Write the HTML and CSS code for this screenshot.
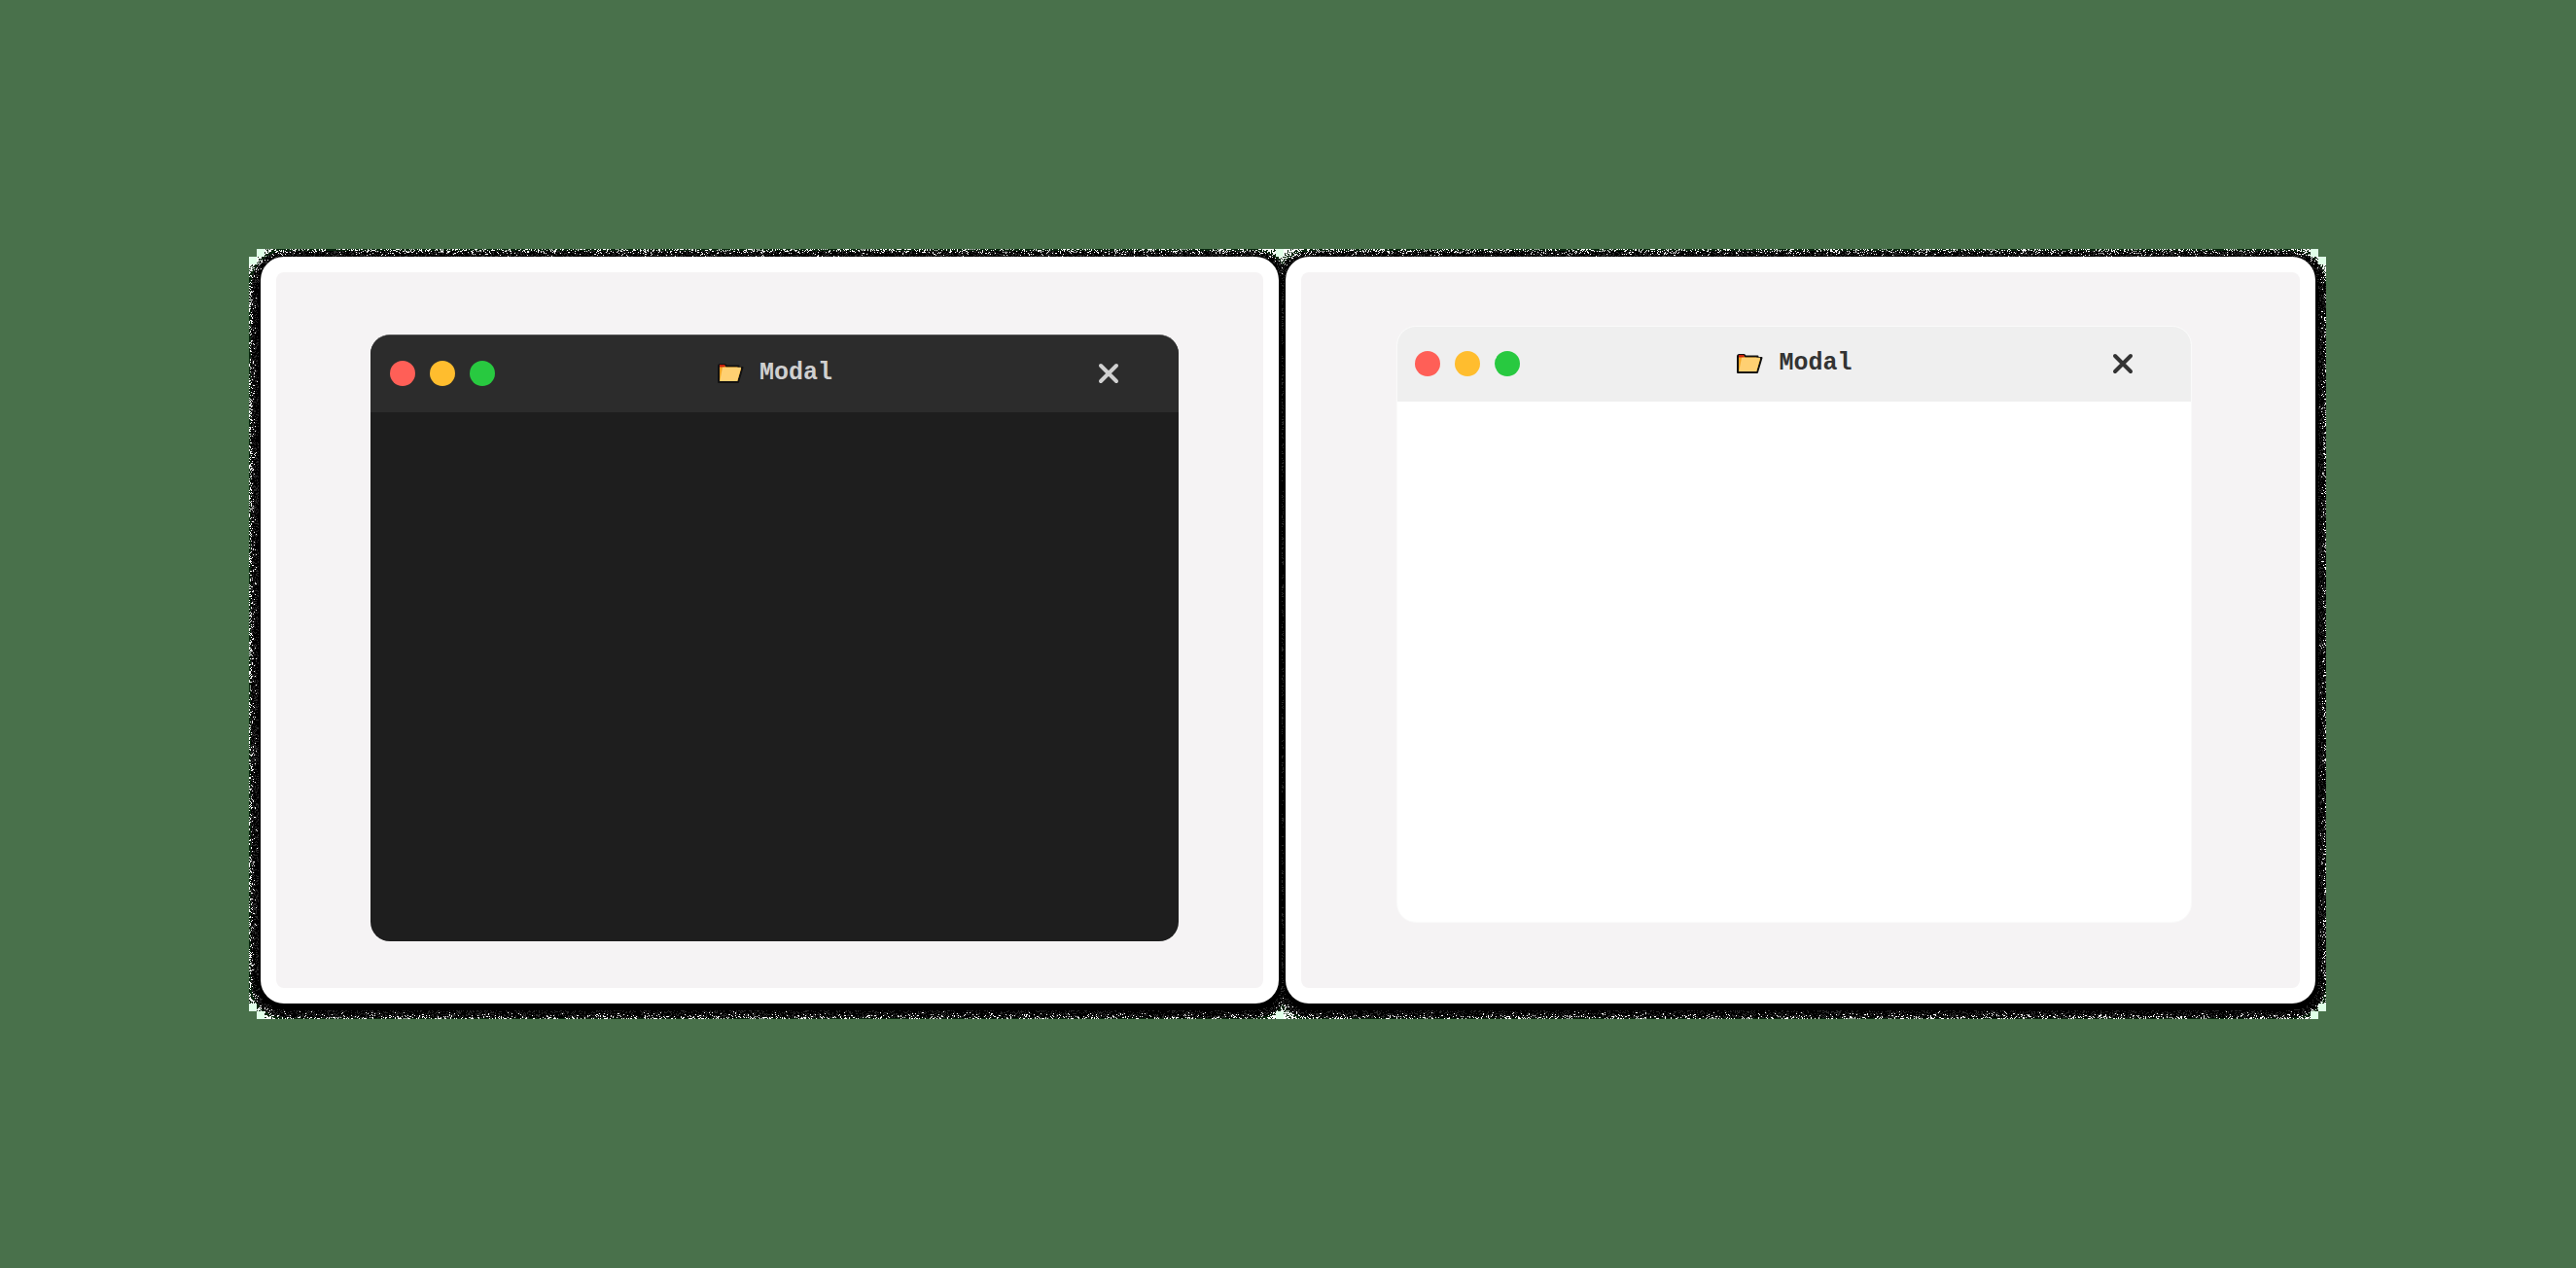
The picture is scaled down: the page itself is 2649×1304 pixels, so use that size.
FILE: index.html
```
<!DOCTYPE html>
<html lang="en">
<head>
<meta charset="utf-8">
<title>Modal</title>
<link rel="stylesheet" href="styles.css">
</head>
<body>
<svg class="sprite" aria-hidden="true">
  <symbol id="folder" viewBox="0 0 28 22">
    <path d="M2 3.500Q2 2 3.500 2H8.500L10 3.500H22.500V5H26.500L22 20H2Z" fill="#f5a623" stroke="#111" stroke-width="2" stroke-linejoin="round"/>
    <path d="M3 2H8.500V4.500H3Z" fill="#c8200c"/>
    <path d="M6 4.800H25.200L21.200 19H3.200Z" fill="#ffd072"/>
  </symbol>
  <symbol id="cross" viewBox="0 0 22 22">
    <path d="M3 3L19 19M19 3L3 19" fill="none" stroke="currentColor" stroke-width="4" stroke-linecap="round"/>
  </symbol>
</svg>
<main class="stage">
  <canvas class="grain" aria-hidden="true"></canvas>
  <article class="card">
    <div class="panel panel-dark">
      <section class="modal modal-dark" aria-labelledby="dark-title">
        <header class="bar">
          <div class="lights"><span class="light red"></span><span class="light amber"></span><span class="light green"></span></div>
          <h2 class="title" id="dark-title"><svg class="folder"><use href="#folder"/></svg>Modal</h2>
          <button class="close" type="button" aria-label="Close"><svg class="cross"><use href="#cross"/></svg></button>
        </header>
        <div class="content"></div>
      </section>
    </div>
  </article>
  <article class="card">
    <div class="panel panel-light">
      <section class="modal modal-light" aria-labelledby="light-title">
        <header class="bar">
          <div class="lights"><span class="light red"></span><span class="light amber"></span><span class="light green"></span></div>
          <h2 class="title" id="light-title"><svg class="folder"><use href="#folder"/></svg>Modal</h2>
          <button class="close" type="button" aria-label="Close"><svg class="cross"><use href="#cross"/></svg></button>
        </header>
        <div class="content"></div>
      </section>
    </div>
  </article>
</main>
<script src="grain.js"></script>
</body>
</html>
```
FILE: styles.css
```
* { box-sizing: border-box; }

body {
  margin: 0;
  min-height: 100vh;
  padding: 256px 257px 256px 256px;
  display: flex;
  background: #49714b;
  font-family: "Courier New", "Liberation Mono", monospace;
}

.sprite { position: absolute; width: 0; height: 0; }

.stage {
  position: relative;
  flex: 1;
  display: grid;
  grid-template-columns: 1047fr 1059fr;
  gap: 7px;
  padding: 8px 11px 16px 12px;
}

/* Speckled shadow behind the cards */
.grain { position: absolute; inset: 0; width: 100%; height: 100%; }

.card {
  position: relative;
  display: flex;
  padding: 16px;
  border-radius: 24px;
  background: #fff;
}

.panel {
  flex: 1;
  display: flex;
  border-radius: 8px;
  background: #f5f3f4;
}
.panel-dark { padding: 64px 87px 48px 97px; }
.panel-light { padding: 55px 111px 67px 98px; }

.modal {
  flex: 1;
  display: flex;
  flex-direction: column;
  min-height: 240px;
  border-radius: 20px;
  overflow: hidden;
}
.modal-dark { background: #1e1e1e; color: #d0d0d0; border-top: 1px solid #555; }
.modal-light { background: #fff; color: #333; border: 1px solid #fafafa; }

.bar {
  display: grid;
  grid-template-columns: 1fr auto 1fr;
  align-items: center;
  height: 79px;
  padding: 0 20px 2px;
}
.modal-dark .bar { background: #2c2c2c; }
.modal-light .bar { background: #efefef; height: 77px; padding: 0 18px 2px; }

.content { flex: 1; }

.lights { display: flex; gap: 15px; }
.light { width: 26px; height: 26px; border-radius: 50%; }
.red { background: #ff5f57; }
.amber { background: #ffbd2e; }
.green { background: #28c940; }

.title {
  display: flex;
  align-items: center;
  gap: 16px;
  margin: 0;
  font-size: 25px;
  line-height: 28px;
  font-weight: 700;
}
.folder { width: 28px; height: 22px; }

.close {
  justify-self: end;
  display: grid;
  place-items: center;
  width: 32px;
  height: 32px;
  margin-right: 36px;
  padding: 0;
  border: 0;
  background: none;
  color: inherit;
  cursor: pointer;
}
.cross { width: 22px; height: 22px; }
```
FILE: grain.js
```
const stage = document.querySelector('.stage');
const canvas = document.querySelector('.grain');

function drawGrain() {
  const w = canvas.width = stage.clientWidth;
  const h = canvas.height = stage.clientHeight;
  const ctx = canvas.getContext('2d');
  const image = ctx.createImageData(w, h);
  const cards = [...document.querySelectorAll('.card')].map(c => ({
    x: c.offsetLeft, y: c.offsetTop + 4, w: c.offsetWidth, h: c.offsetHeight
  }));
  let seed = 7;
  const random = () => (seed = (seed * 1664525 + 1013904223) >>> 0) / 4294967296;

  // Distance from a point to the nearest card's rounded shadow outline.
  const distance = (x, y) => Math.min(...cards.map(c => {
    const dx = Math.max(c.x + 24 - x, x - (c.x + c.w - 24), 0);
    const dy = Math.max(c.y + 24 - y, y - (c.y + c.h - 24), 0);
    return Math.hypot(dx, dy) - 24;
  }));

  for (let y = 0; y < h; y++) {
    for (let x = 0; x < w; x++) {
      // The cards cover the middle of these rows.
      if (y > 50 && y < h - 60 && x === 14) x = cards[0].x + cards[0].w - 2;
      if (y > 50 && y < h - 60 && x === cards[1].x + 2) x = w - 16;
      const block = distance((x >> 3) * 8 + 4, (y >> 3) * 8 + 4);
      if (block > 20) continue;
      const d = distance(x, y);
      let color = [0, 0, 0];
      if (block > 15) {
        color = block > 17.5 ? [195, 235, 202] : [224, 255, 232];
      } else {
        const r = random();
        const white = Math.pow(Math.max(d - 3, 0) / 12, 2) * 0.6;
        if (r < white || d > 13 && r < 0.7) color = [255, 255, 255];
        else if (d > 10) color = [8, 38, 13];
        else if (d > 2 && r > 0.76) color = [44, 44, 44];
      }
      image.data.set([...color, 255], (y * w + x) * 4);
    }
  }
  ctx.putImageData(image, 0, 0);
}

drawGrain();
window.addEventListener('resize', drawGrain);
```
